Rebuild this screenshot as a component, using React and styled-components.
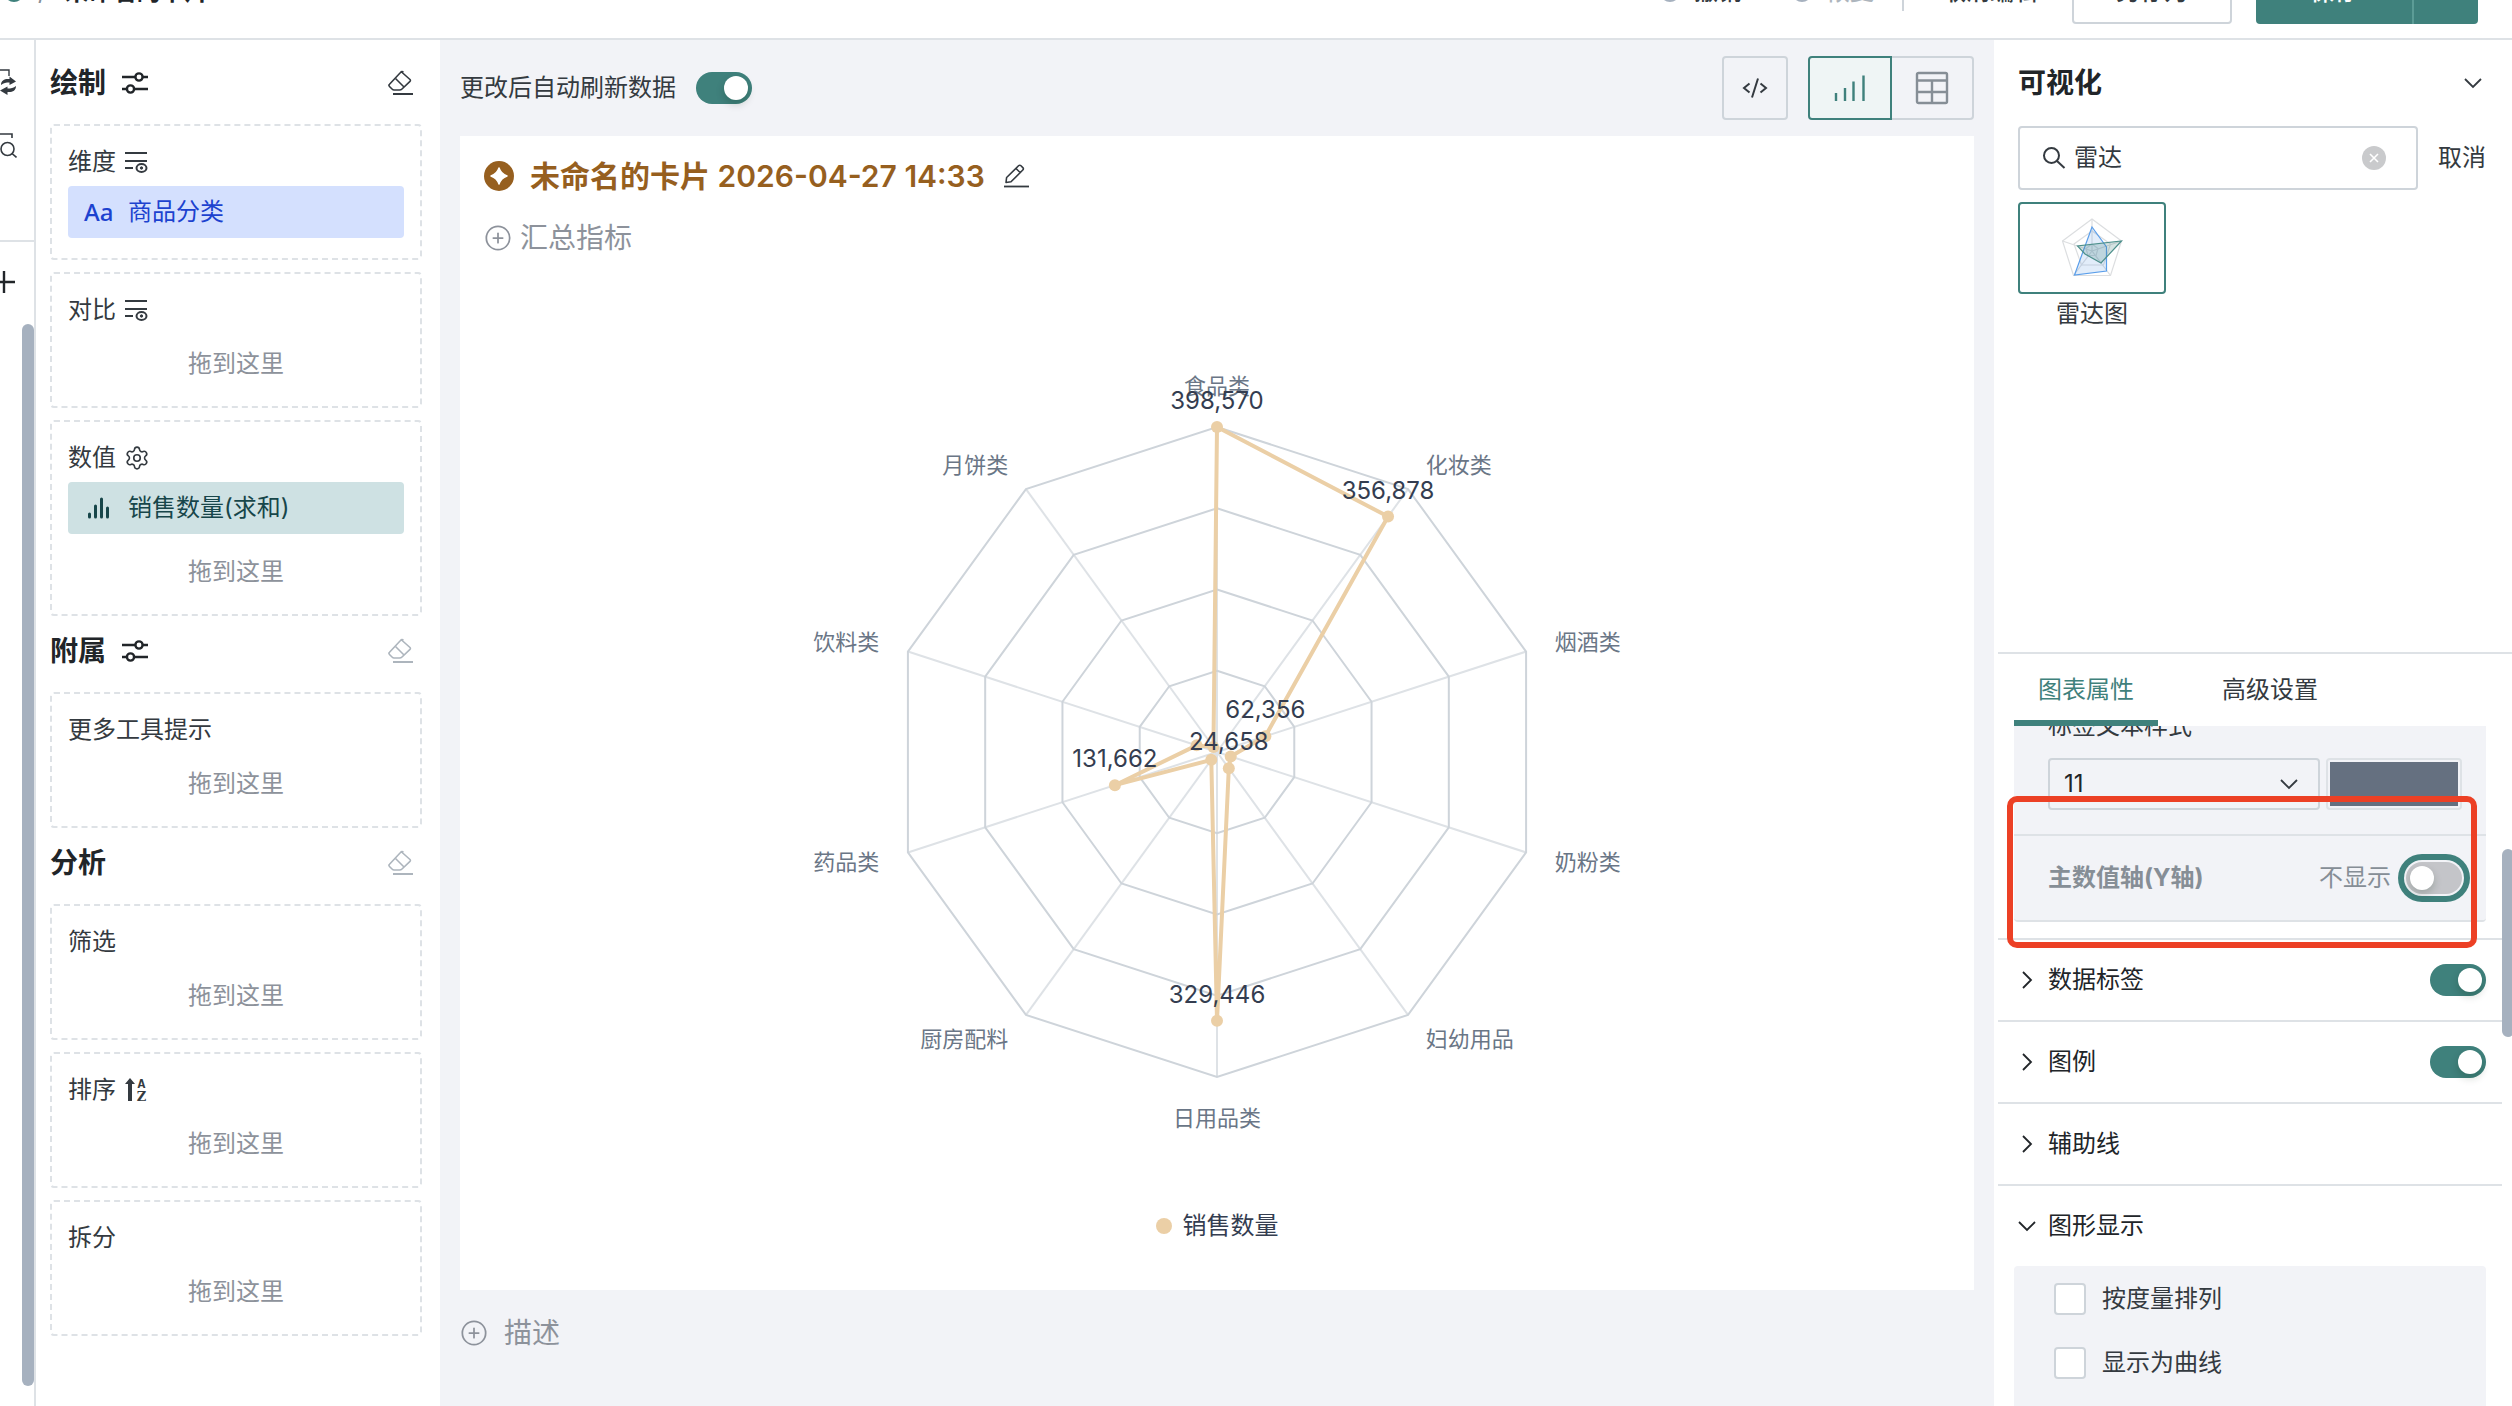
import React from 'react';
import styled, { createGlobalStyle, css } from 'styled-components';
import { CirclePlus, Settings } from 'lucide-react';

const teal = '#3f817c';
const line = '#dee2e6';
const border = '#ced4da';
const panel = '#f2f3f7';
const ink = '#343a40';
const dark = '#212529';
const muted = '#868e96';
const thumb = '#a6b1bf';

const GlobalStyle = createGlobalStyle`
    * {
        box-sizing: border-box;
    }

    body {
        margin: 0;
        background: white;
        color: ${ink};
        font-family: Inter, "Noto Sans CJK SC", sans-serif;
        font-size: 24px;
        line-height: 32px;
    }

    button, input, select {
        font: inherit;
        color: inherit;
    }

    button {
        padding: 0;
        border: 0;
        background: none;
        cursor: pointer;
    }

    svg {
        display: block;
        flex: none;
    }
`

const Page = styled.div`
    display: flex;
    flex-direction: column;
    height: 100vh;
    overflow: hidden;
`

/* ---------- top bar ---------- */

const TopBar = styled.header`
    display: flex;
    align-items: flex-end;
    justify-content: space-between;
    flex: none;
    height: 40px;
    padding: 0 34px 14px 4px;
    border-bottom: 2px solid ${line};
    overflow: hidden;
`

const TopGroup = styled.div`
    display: flex;
    align-items: center;
    height: 64px;
    flex: none;
`

const HomeLink = styled.a`
    width: 20px;
    height: 20px;
    border-radius: 50%;
    background: ${teal};
`

const Slash = styled.span`
    margin: 0 18px 0 14px;
    color: ${muted};
`

const PageTitle = styled.h1`
    margin: 0;
    font-size: 24px;
    font-weight: 700;
    color: ${dark};
`

const TopAction = styled.button`
    display: flex;
    align-items: center;
    gap: 14px;
    margin-right: ${p => p.$space}px;
    color: ${p => (p.$off ? '#adb5bd' : ink)};
    font-weight: 500;
`

const TopDot = styled.span`
    width: 20px;
    height: 20px;
    border-radius: 50%;
    border: 2px solid ${thumb};
`

const TopDivider = styled.span`
    width: 2px;
    height: 38px;
    margin-right: 38px;
    background: ${border};
`

const OutlineButton = styled.button`
    width: 160px;
    height: 64px;
    margin-right: 24px;
    border: 2px solid ${border};
    border-radius: 4px;
    font-weight: 500;
`

const SaveButton = styled.button`
    width: 156px;
    height: 64px;
    border-radius: 4px 0 0 4px;
    background: ${teal};
    color: white;
    font-weight: 500;
`

const SaveMore = styled.button`
    width: 66px;
    height: 64px;
    border-left: 2px solid #5c9c96;
    border-radius: 0 4px 4px 0;
    background: ${teal};
`

const Body = styled.div`
    display: flex;
    flex: 1;
    min-height: 0;
`

/* ---------- rail ---------- */

const Rail = styled.nav`
    display: flex;
    flex-direction: column;
    flex: none;
    width: 36px;
    border-right: 2px solid ${line};
`

const RailTools = styled.div`
    display: flex;
    flex-direction: column;
    gap: 36px;
    height: 202px;
    padding-top: 28px;
    border-bottom: 2px solid ${line};
`

const RailAdd = styled.button`
    align-self: flex-start;
    margin: 28px 0 30px;
`

const RailThumb = styled.div`
    flex: 1;
    align-self: flex-end;
    width: 12px;
    margin-bottom: 20px;
    border-radius: 6px;
    background: ${thumb};
`

/* ---------- fields ---------- */

const Fields = styled.aside`
    flex: none;
    width: 404px;
    padding: 8px 18px 0 14px;
`

const SectionHead = styled.div`
    display: flex;
    align-items: center;
    justify-content: space-between;
    height: 70px;
    margin-bottom: 6px;
    padding-right: 8px;
`

const SectionTitle = styled.h2`
    display: flex;
    align-items: center;
    gap: 16px;
    margin: 0;
    font-size: 28px;
    font-weight: 700;
    color: ${dark};
`

const IconButton = styled.button`
    color: ${p => (p.$off ? '#adb5bd' : ink)};
`

const Zones = styled.div`
    display: flex;
    flex-direction: column;
    gap: 12px;
`

const Zone = styled.div`
    padding: 12px 16px;
    border: 2px dashed ${line};
    border-radius: 4px;
`

const ZoneLabel = styled.div`
    display: flex;
    align-items: center;
    gap: 8px;
    height: 48px;
`

const Chip = styled.div`
    display: flex;
    align-items: center;
    height: 52px;
    margin-bottom: 8px;
    padding-left: 16px;
    border-radius: 4px;
    background: ${p => (p.$measure ? '#cee1e3' : '#d4e0fe')};
    color: ${p => (p.$measure ? '#17464a' : '#1c42cf')};
`

const ChipIcon = styled.span`
    display: flex;
    width: 44px;
    font-weight: 500;
    font-family: "Noto Sans", sans-serif;
`

const Hint = styled.div`
    height: 60px;
    line-height: 60px;
    text-align: center;
    color: #8d929b;
`

/* ---------- canvas ---------- */

const Canvas = styled.main`
    display: flex;
    flex-direction: column;
    flex: 1;
    min-width: 0;
    padding: 0 20px 30px;
    background: ${panel};
`

const Toolbar = styled.div`
    display: flex;
    align-items: center;
    justify-content: space-between;
    height: 96px;
    flex: none;
`

const SwitchLabel = styled.label`
    display: flex;
    align-items: center;
    gap: 20px;
`

const Switch = styled.input.attrs({ type: 'checkbox', role: 'switch' })`
    appearance: none;
    display: flex;
    align-items: center;
    flex: none;
    width: 56px;
    height: 32px;
    margin: 0;
    padding: 0 4px;
    border-radius: 16px;
    background: #c4c5c9;
    cursor: pointer;

    &::before {
        content: "";
        width: 24px;
        height: 24px;
        border-radius: 50%;
        background: white;
        box-shadow: 0 4px 8px rgba(0, 35, 11, 0.2);
    }

    &:checked {
        justify-content: flex-end;
        background: ${teal};
    }

    ${p => p.$ring && css`
        box-shadow: 0 0 0 2px ${panel}, 0 0 0 8px ${teal};
    `}
`

const Buttons = styled.div`
    display: flex;
`

const ViewButton = styled.button`
    display: flex;
    align-items: center;
    justify-content: center;
    width: ${p => p.$w}px;
    height: 64px;
    border: 2px solid ${border};
    border-radius: 4px;
    color: ${ink};

    ${p => p.$first && css`
        margin-left: 20px;
        border-color: ${teal};
        border-radius: 4px 0 0 4px;
        background: #eff5f5;
        color: ${teal};
    `}

    ${p => p.$last && css`
        border-left: 0;
        border-radius: 0 4px 4px 0;
        color: ${muted};
    `}
`

const Card = styled.section`
    display: flex;
    flex-direction: column;
    flex: 1;
    min-height: 0;
    background: white;
`

const CardHead = styled.div`
    display: flex;
    align-items: center;
    height: 80px;
    flex: none;
    padding-left: 24px;
`

const CardTitle = styled.h2`
    margin: 0 18px 0 16px;
    font-size: 30px;
    font-weight: 600;
    color: #965f1f;
`

const AddLine = styled.button`
    display: flex;
    align-items: center;
    align-self: flex-start;
    gap: ${p => p.$gap}px;
    height: ${p => p.$h}px;
    flex: none;
    font-size: 28px;
    color: #8d929b;
    padding-left: ${p => p.$pad}px;
`

const ChartSvg = styled.svg`
    flex: 1;
    width: 100%;
    min-height: 0;
    font-family: Inter, "Noto Sans CJK SC", sans-serif;
`

const Legend = styled.div`
    display: flex;
    align-items: center;
    justify-content: center;
    gap: 11px;
    height: 72px;
    margin-bottom: 28px;
    flex: none;
    color: #343d50;
`

const LegendDot = styled.span`
    width: 16px;
    height: 16px;
    border-radius: 50%;
    background: #ebcfa6;
`

/* ---------- settings ---------- */

const SettingsPanel = styled.aside`
    display: flex;
    flex-direction: column;
    flex: none;
    width: 518px;
    overflow: hidden;
`

const Gallery = styled.div`
    flex: none;
    min-height: 612px;
    padding: 8px 22px 0 24px;
`

const SearchRow = styled.div`
    display: flex;
    align-items: center;
    gap: 20px;
    margin: 8px 0 12px;
`

const SearchBox = styled.div`
    display: flex;
    align-items: center;
    gap: 8px;
    width: 400px;
    height: 64px;
    padding: 0 30px 0 22px;
    border: 2px solid ${border};
    border-radius: 4px;
`

const SearchInput = styled.input`
    flex: 1;
    min-width: 0;
    padding: 0;
    border: 0;
    outline: 0;
    background: none;
`

const ChartPick = styled.button`
    display: flex;
    flex-direction: column;
    align-items: center;
    gap: 4px;
    width: 148px;
`

const ChartThumb = styled.span`
    display: flex;
    align-items: center;
    justify-content: center;
    width: 148px;
    height: 92px;
    border: 2px solid ${teal};
    border-radius: 4px;
`

const Tabs = styled.div`
    display: flex;
    flex: none;
    gap: 40px;
    height: 74px;
    margin-left: 4px;
    padding-left: 16px;
    border-top: 2px solid ${line};
`

const Tab = styled.button`
    padding: 0 24px;
    color: ${p => (p.$on ? teal : ink)};
    box-shadow: ${p => (p.$on ? `inset 0 -6px 0 ${teal}` : 'none')};
`

const Scroller = styled.div`
    display: flex;
    flex: 1;
    min-height: 0;
    margin-left: 4px;
    overflow: hidden;
`

const ScrollBody = styled.div`
    flex: 1;
    min-width: 0;
    margin-top: -18px;
`

const ScrollThumb = styled.div`
    flex: none;
    width: 12px;
    height: 188px;
    margin: 123px -2px 0 0;
    border-radius: 6px;
    background: ${thumb};
`

const Group = styled.div`
    margin: 0 16px;
    border-radius: 4px;
    background: ${panel};
`

const AxisGroup = styled(Group)`
    margin-bottom: 16px;
    border-bottom: 2px solid ${line};
`

const TextStyle = styled.div`
    padding: 0 24px 24px 34px;
    border-bottom: 2px solid ${line};
`

const StyleLabel = styled.label`
    display: block;
    height: 50px;
    line-height: 36px;
`

const StyleRow = styled.div`
    display: flex;
    gap: 6px;
`

const SelectBox = styled.div`
    display: grid;
    align-items: center;
    width: 272px;

    > * {
        grid-area: 1 / 1;
    }

    > svg {
        justify-self: end;
        margin-right: 22px;
        pointer-events: none;
    }
`

const Select = styled.select`
    appearance: none;
    height: 52px;
    padding: 0 14px;
    border: 2px solid ${border};
    border-radius: 4px;
    background: none;
    color: ${dark};
`

const Colour = styled.input.attrs({ type: 'color' })`
    appearance: none;
    width: 136px;
    height: 52px;
    padding: 2px;
    border: 2px solid ${line};
    border-radius: 4px;
    background: none;

    &::-webkit-color-swatch-wrapper {
        padding: 0;
    }

    &::-webkit-color-swatch {
        border: 0;
        border-radius: 0;
    }
`

const AxisRow = styled.label`
    position: relative;
    display: flex;
    align-items: center;
    height: 84px;
    padding: 0 24px 0 34px;
    color: ${muted};
`

const AxisName = styled.strong`
    flex: 1;
    font-weight: 700;
`

const AxisState = styled.span`
    margin-right: 15px;
`

const Marker = styled.span`
    position: absolute;
    z-index: 2;
    top: -40px;
    right: 9px;
    bottom: -28px;
    left: -7px;
    border: 6px solid #ec4025;
    border-radius: 10px;
    pointer-events: none;
`

const OptionRow = styled.div`
    display: flex;
    align-items: center;
    gap: 12px;
    height: ${p => (p.$open ? 82 : 82)}px;
    padding: 0 16px 0 20px;
    border-top: 2px solid ${line};
    color: ${dark};

    > button {
        display: flex;
        align-items: center;
        gap: 12px;
        flex: 1;
    }
`

const CheckRow = styled.label`
    display: flex;
    align-items: center;
    gap: 16px;
    height: 64px;
    padding: 2px 0 0 40px;
`

const Checkbox = styled.input.attrs({ type: 'checkbox' })`
    appearance: none;
    width: 32px;
    height: 32px;
    margin: 0;
    border: 2px solid ${border};
    border-radius: 4px;
    background: white;
`

/* ---------- icons ---------- */

const SlidersIcon = () => (
    <svg width="26" height="26" viewBox="0 0 26 26" fill="none" stroke="currentColor" strokeWidth="2.4">
        <path d="M0 7h13M21 7h5M0 19h4.500M12.500 19H26" />
        <circle cx="17" cy="7" r="3.600" />
        <circle cx="8.500" cy="19" r="3.600" />
    </svg>
)

const EraserIcon = () => (
    <svg width="26" height="26" viewBox="0 0 26 26" fill="none" stroke="currentColor" strokeWidth="1.600" strokeLinejoin="round">
        <path d="M13 1.500 L22 9.500 C22.600 10.200 22.600 10.600 22 11.300 L14 19 C13 20 12.500 20 11.500 20 L6 20 C5 20 4.800 19.800 4 19 L1.500 16.500 C.7 15.700 .7 15 1.500 14.200 L12.500 2.500 C13.500 1.300 14.500 1.300 15.400 2.200" />
        <path d="M7.500 8.500 L16 17" />
        <path d="M5 24h20" strokeWidth="2" />
    </svg>
)

const RowsEyeIcon = () => (
    <svg width="24" height="24" viewBox="0 0 24 24" fill="none" stroke="currentColor" strokeWidth="2">
        <path d="M1 3h22M1 11h22M1 18h8" />
        <ellipse cx="17.500" cy="18" rx="5" ry="4" />
        <circle cx="17.500" cy="18" r="1.200" fill="currentColor" strokeWidth="1" />
    </svg>
)

const SortIcon = () => (
    <svg width="24" height="26" viewBox="0 0 24 26" fill="currentColor">
        <path d="M1 7 L6 1 L11 7 H8 V24 H4 V7 Z" />
        <text x="17.500" y="11" textAnchor="middle" fontSize="13" fontWeight="700" fontFamily="Liberation Mono, monospace">A</text>
        <text x="17.500" y="24" textAnchor="middle" fontSize="13" fontWeight="700" fontFamily="DejaVu Serif, serif">Z</text>
    </svg>
)

const MeasureIcon = () => (
    <svg width="28" height="24" viewBox="0 0 28 24" fill="none" stroke="currentColor" strokeWidth="3" strokeLinecap="round">
        <path d="M5.500 18v3M11.500 10v11M17.500 3v18M23.500 12v9" />
    </svg>
)

const Chevron = ({ right }) => (
    <svg width="18" height="18" viewBox="0 0 18 18" fill="none" stroke="currentColor" strokeWidth="1.800">
        <path d={right ? 'M5 1 L13 9 L5 17' : 'M1 5 L9 13 L17 5'} />
    </svg>
)

const CodeIcon = () => (
    <svg width="26" height="22" viewBox="0 0 26 22" fill="none" stroke="currentColor" strokeWidth="2">
        <path d="M7.500 6.500 L2 11 L7.500 15.500M18.500 6.500 L24 11 L18.500 15.500M16 1.500 L10 20.500" />
    </svg>
)

const BarsIcon = () => (
    <svg width="32" height="28" viewBox="0 0 32 28" fill="none" stroke="currentColor" strokeWidth="2.400">
        <path d="M2 19v8M11 14v13M19.500 7.500v19.500M29.500 1.500v25.500" />
    </svg>
)

const TableIcon = () => (
    <svg width="34" height="34" viewBox="0 0 34 34" fill="none" stroke="currentColor" strokeWidth="2.400">
        <rect x="2" y="2" width="30" height="30" rx="1.500" />
        <path d="M2 9.500h30M2 21h30M17 9.500v22.500" />
    </svg>
)

const GemIcon = () => (
    <svg width="30" height="30" viewBox="0 0 30 30">
        <circle cx="15" cy="15" r="15" fill="#965f1f" />
        <path d="M15 7 Q17 13 23 15 Q17 17 15 23 Q13 17 7 15 Q13 13 15 7Z" fill="white" stroke="white" strokeWidth="1.500" strokeLinejoin="round" />
    </svg>
)

const PencilIcon = () => (
    <svg width="26" height="24" viewBox="0 0 26 24" fill="none" stroke="currentColor" strokeWidth="1.600" strokeLinejoin="round">
        <path d="M3 18.500 L3.600 13.500 L15.500 1.800 C16.300 1 17.200 1 18 1.800 L19.800 3.600 C20.600 4.400 20.600 5.200 19.800 6 L8 17.800 Z M13 4.500 L17.300 8.700" />
        <path d="M1 22.500h25" strokeWidth="1.800" />
    </svg>
)

const SearchIcon = () => (
    <svg width="24" height="24" viewBox="0 0 24 24" fill="none" stroke="currentColor" strokeWidth="2">
        <circle cx="9.500" cy="9.500" r="7.500" />
        <path d="M15 15 L22.500 22" />
    </svg>
)

const ClearIcon = () => (
    <svg width="24" height="24" viewBox="0 0 24 24">
        <circle cx="12" cy="12" r="12" fill="#c9cacc" />
        <path d="M8 8 L16 16 M16 8 L8 16" stroke="white" strokeWidth="1.600" />
    </svg>
)

const SyncIcon = () => (
    <svg width="17" height="28" viewBox="0 0 17 28" fill="currentColor">
        <path d="M0 2H9V8" fill="none" stroke="currentColor" strokeWidth="1.400" />
        <path d="M1 17 C1 12 5 10.500 9.500 11 V8.500 L16 13.500 L9.500 17 V14.500 C6 14.500 3.500 15 1 17Z" />
        <path d="M16 18 C16 23 12 24.500 7.500 24 V27 L0 22.500 L7.500 18.500 V20.500 C11 20.500 13.500 20 16 18Z" />
    </svg>
)

const FindIcon = () => (
    <svg width="17" height="28" viewBox="0 0 17 28" fill="none" stroke="currentColor" strokeWidth="1.600">
        <path d="M0 2H12V6" />
        <circle cx="7.500" cy="17" r="6.500" />
        <path d="M12 21.500 L16.500 25.500" />
    </svg>
)

const PlusIcon = () => (
    <svg width="16" height="24" viewBox="0 0 16 24" fill="none" stroke={dark} strokeWidth="2.400">
        <path d="M4 1v22M0 12h15" />
    </svg>
)

const RadarThumb = () => (
    <svg width="62" height="60" viewBox="0 0 62 60" fill="none" strokeWidth="1.200">
        <g stroke="#dcdee0">
            <path d="M31 1 L60.500 23 L49.500 57.500 H12.500 L1.500 23 Z" />
            <path d="M31 13 L49.500 26 L42.500 47 H20.500 L13 26 Z" />
            <path d="M31 26 L37 30.500 L35 37.500 H27 L25 30.500 Z" />
            <path d="M31 33 V1M31 33 L60.500 23M31 33 L49.500 57.500M31 33 L12.500 57.500M31 33 L1.500 23" />
        </g>
        <path d="M31 9 L45.500 29 V53 L13.500 57 Z" fill="#4a90e2" fillOpacity=".16" stroke="#5a9eea" />
        <path d="M60.500 23 L40 45 L24 36 L16.500 28 Z" fill={teal} fillOpacity=".22" stroke="#4d908c" />
    </svg>
)

/* ---------- radar chart ---------- */

const data = [
    { name: '食品类', value: 398570, show: true },
    { name: '化妆类', value: 356878, show: true },
    { name: '烟酒类', value: 62356, show: true },
    { name: '奶粉类', value: 17660 },
    { name: '妇幼用品', value: 24658, show: true },
    { name: '日用品类', value: 329446, show: true },
    { name: '厨房配料', value: 11900 },
    { name: '药品类', value: 131662, show: true },
    { name: '饮料类', value: 26300 },
    { name: '月饼类', value: 7400 },
];

const cx = 757;
const cy = 492;
const radius = 325;
const max = 398570;

const at = (i, r) => {
    const a = (Math.PI * 2 * i) / data.length;
    return [cx + r * Math.sin(a), cy - r * Math.cos(a)];
}

const polygon = (rs) => rs.map((r, i) => at(i, r).join(',')).join(' ');

const anchor = (i) => {
    if (i === 0 || i === 5) return 'middle';
    return i < 5 ? 'start' : 'end';
}

// top and bottom names sit fully outside the ring, side names are centred on it
const nameShift = (i) => (i === 0 ? -3 : i === 5 ? 19 : 8);

const Radar = () => {
    const points = data.map((d, i) => at(i, (d.value / max) * radius));

    return (
        <ChartSvg viewBox="0 0 1514 930" role="img" aria-label="销售数量">
            {data.map((d, i) => {
                const [x, y] = at(i, radius);
                return <line key={d.name} x1={cx} y1={cy} x2={x} y2={y} stroke={line} strokeWidth="2" />
            })}

            {[1, 2, 3, 4].map(n => (
                <polygon key={n} points={polygon(data.map(() => (radius * n) / 4))} fill="none" stroke={border} strokeWidth="2" />
            ))}

            {data.map((d, i) => {
                const [x, y] = at(i, radius + 30);
                return (
                    <text key={d.name} x={x} y={y + nameShift(i)} textAnchor={anchor(i)} fontSize="22" fill="#6a7686">{d.name}</text>
                )
            })}

            <polygon points={points.map(p => p.join(',')).join(' ')} fill="none" stroke="#ebcfa6" strokeWidth="4" strokeLinejoin="bevel" />
            {points.map(([x, y], i) => <circle key={i} cx={x} cy={y} r="6" fill="#ebcfa6" />)}

            {data.map((d, i) => d.show && (
                <text key={d.name} x={points[i][0]} y={points[i][1] - 18} textAnchor="middle" fontSize="24" fill="#343d50">
                    {d.value.toLocaleString('en-US')}
                </text>
            ))}
        </ChartSvg>
    )
}

/* ---------- page ---------- */

const Section = ({ title, tune, off, children }) => (
    <section>
        <SectionHead>
            <SectionTitle>{title}{tune && <SlidersIcon />}</SectionTitle>
            <IconButton $off={off} aria-label={`清空${title}`}><EraserIcon /></IconButton>
        </SectionHead>
        <Zones>{children}</Zones>
    </section>
)

const DropZone = ({ label, icon, children, full }) => (
    <Zone>
        <ZoneLabel>{label}{icon}</ZoneLabel>
        {children}
        {!full && <Hint>拖到这里</Hint>}
    </Zone>
)

const Option = ({ label, open, toggle }) => (
    <OptionRow>
        <button aria-expanded={!!open}><Chevron right={!open} />{label}</button>
        {toggle && <Switch defaultChecked aria-label={label} />}
    </OptionRow>
)

const App = () => {
    return (
        <Page>
            <GlobalStyle />

            <TopBar>
                <TopGroup>
                    <HomeLink href="#" aria-label="首页" />
                    <Slash>/</Slash>
                    <PageTitle>未命名的卡片 2026-04-27...</PageTitle>
                </TopGroup>
                <TopGroup>
                    <TopAction $space={50}><TopDot />撤销</TopAction>
                    <TopAction $off $space={28}><TopDot />恢复</TopAction>
                    <TopDivider />
                    <TopAction $space={34}>取消编辑</TopAction>
                    <OutlineButton>另存为</OutlineButton>
                    <SaveButton>保存</SaveButton>
                    <SaveMore aria-label="更多" />
                </TopGroup>
            </TopBar>

            <Body>
                <Rail>
                    <RailTools>
                        <IconButton aria-label="切换"><SyncIcon /></IconButton>
                        <IconButton aria-label="查找"><FindIcon /></IconButton>
                    </RailTools>
                    <RailAdd aria-label="新增"><PlusIcon /></RailAdd>
                    <RailThumb />
                </Rail>

                <Fields>
                    <Section title="绘制" tune>
                        <DropZone label="维度" icon={<RowsEyeIcon />} full>
                            <Chip><ChipIcon>Aa</ChipIcon>商品分类</Chip>
                        </DropZone>
                        <DropZone label="对比" icon={<RowsEyeIcon />} />
                        <DropZone label="数值" icon={<Settings size={26} strokeWidth={1.5} />}>
                            <Chip $measure><ChipIcon><MeasureIcon /></ChipIcon>销售数量(求和)</Chip>
                        </DropZone>
                    </Section>
                    <Section title="附属" tune off>
                        <DropZone label="更多工具提示" />
                    </Section>
                    <Section title="分析" off>
                        <DropZone label="筛选" />
                        <DropZone label="排序" icon={<SortIcon />} />
                        <DropZone label="拆分" />
                    </Section>
                </Fields>

                <Canvas>
                    <Toolbar>
                        <SwitchLabel>更改后自动刷新数据<Switch defaultChecked /></SwitchLabel>
                        <Buttons>
                            <ViewButton $w={66} aria-label="代码"><CodeIcon /></ViewButton>
                            <ViewButton $w={84} $first aria-label="图表"><BarsIcon /></ViewButton>
                            <ViewButton $w={82} $last aria-label="表格"><TableIcon /></ViewButton>
                        </Buttons>
                    </Toolbar>

                    <Card>
                        <CardHead>
                            <GemIcon />
                            <CardTitle>未命名的卡片 2026-04-27 14:33</CardTitle>
                            <IconButton aria-label="重命名"><PencilIcon /></IconButton>
                        </CardHead>
                        <AddLine $gap={8} $h={44} $pad={24}><CirclePlus size={28} strokeWidth={1.5} />汇总指标</AddLine>
                        <Radar />
                        <Legend><LegendDot />销售数量</Legend>
                    </Card>

                    <AddLine $gap={16} $h={86} $pad={0}><CirclePlus size={28} strokeWidth={1.5} />描述</AddLine>
                </Canvas>

                <SettingsPanel>
                    <Gallery>
                        <SectionHead>
                            <SectionTitle>可视化</SectionTitle>
                            <IconButton aria-label="收起"><Chevron /></IconButton>
                        </SectionHead>
                        <SearchRow>
                            <SearchBox>
                                <SearchIcon />
                                <SearchInput aria-label="搜索图表" defaultValue="雷达" />
                                <IconButton aria-label="清除"><ClearIcon /></IconButton>
                            </SearchBox>
                            <IconButton>取消</IconButton>
                        </SearchRow>
                        <ChartPick>
                            <ChartThumb><RadarThumb /></ChartThumb>
                            雷达图
                        </ChartPick>
                    </Gallery>

                    <Tabs>
                        <Tab $on>图表属性</Tab>
                        <Tab>高级设置</Tab>
                    </Tabs>

                    <Scroller>
                        <ScrollBody>
                            <AxisGroup>
                                <TextStyle>
                                    <StyleLabel htmlFor="label-size">标签文本样式</StyleLabel>
                                    <StyleRow>
                                        <SelectBox>
                                            <Select id="label-size" defaultValue="11">
                                                <option>11</option>
                                                <option>12</option>
                                                <option>14</option>
                                            </Select>
                                            <Chevron />
                                        </SelectBox>
                                        <Colour aria-label="文本颜色" defaultValue="#657080" />
                                    </StyleRow>
                                </TextStyle>
                                <AxisRow>
                                    <AxisName>主数值轴(Y轴)</AxisName>
                                    <AxisState>不显示</AxisState>
                                    <Switch $ring />
                                    <Marker />
                                </AxisRow>
                            </AxisGroup>

                            <Option label="数据标签" toggle />
                            <Option label="图例" toggle />
                            <Option label="辅助线" />
                            <Option label="图形显示" open />

                            <Group>
                                <CheckRow><Checkbox />按度量排列</CheckRow>
                                <CheckRow><Checkbox />显示为曲线</CheckRow>
                                <CheckRow><Checkbox />显示面积</CheckRow>
                            </Group>
                        </ScrollBody>
                        <ScrollThumb />
                    </Scroller>
                </SettingsPanel>
            </Body>
        </Page>
    );
}

export default App;
